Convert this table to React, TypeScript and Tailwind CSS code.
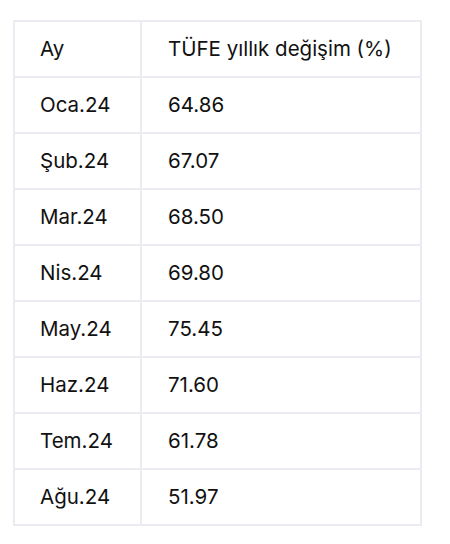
const rows = [
  { ay: "Oca.24", value: "64.86" },
  { ay: "Şub.24", value: "67.07" },
  { ay: "Mar.24", value: "68.50" },
  { ay: "Nis.24", value: "69.80" },
  { ay: "May.24", value: "75.45" },
  { ay: "Haz.24", value: "71.60" },
  { ay: "Tem.24", value: "61.78" },
  { ay: "Ağu.24", value: "51.97" },
];

export default function App() {
  return (
    <div
      className="min-h-[544px] bg-white pt-[20px] pl-[13px] text-[#111111]"
      style={{ fontFamily: "Inter, 'Noto Sans', sans-serif" }}
    >
      <table className="w-[409px] border-collapse border-2 border-[#ebebf2] text-[20.5px]">
        <tbody>
          <tr className="h-[56px]">
            <td className="w-[127px] border-2 border-[#ebebf2] pl-[25px]">Ay</td>
            <td className="border-2 border-[#ebebf2] pl-[26px]">TÜFE yıllık değişim (%)</td>
          </tr>
          {rows.map((row) => (
            <tr key={row.ay} className="h-[56px]">
              <td className="border-2 border-[#ebebf2] pl-[25px]">{row.ay}</td>
              <td className="border-2 border-[#ebebf2] pl-[26px]">{row.value}</td>
            </tr>
          ))}
        </tbody>
      </table>
    </div>
  );
}
